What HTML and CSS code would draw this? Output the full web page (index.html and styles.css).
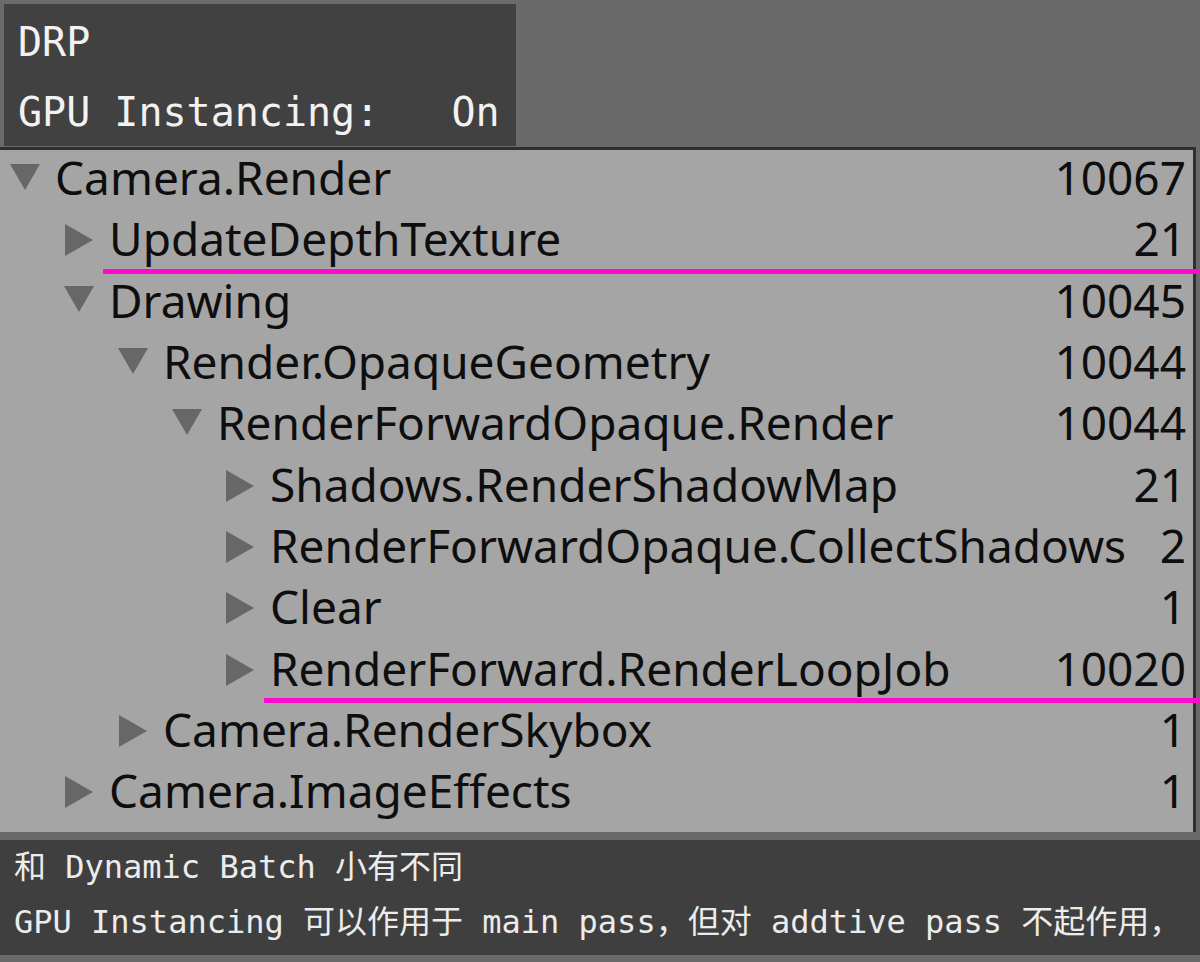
FILE: index.html
```html
<!DOCTYPE html>
<html lang="zh">
<head>
<meta charset="utf-8">
<title>Profiler</title>
<link rel="stylesheet" href="styles.css">
</head>
<body>
<div class="stats">
  <div class="line">DRP</div>
  <div class="line">GPU Instancing:   On</div>
</div>
<div class="panel">
  <div class="row l0"><span class="tw"><svg class="down" width="30" height="26" viewBox="0 0 30 26"><polygon points="0,0 30,0 15,26"/></svg></span><span class="name">Camera.Render</span><span class="num">10067</span></div>
  <div class="row l1 marked"><span class="tw"><svg class="right" width="28" height="32" viewBox="0 0 28 32"><polygon points="0,0 28,16 0,32"/></svg></span><span class="name">UpdateDepthTexture</span><span class="num">21</span></div>
  <div class="row l1"><span class="tw"><svg class="down" width="30" height="26" viewBox="0 0 30 26"><polygon points="0,0 30,0 15,26"/></svg></span><span class="name">Drawing</span><span class="num">10045</span></div>
  <div class="row l2"><span class="tw"><svg class="down" width="30" height="26" viewBox="0 0 30 26"><polygon points="0,0 30,0 15,26"/></svg></span><span class="name">Render.OpaqueGeometry</span><span class="num">10044</span></div>
  <div class="row l3"><span class="tw"><svg class="down" width="30" height="26" viewBox="0 0 30 26"><polygon points="0,0 30,0 15,26"/></svg></span><span class="name">RenderForwardOpaque.Render</span><span class="num">10044</span></div>
  <div class="row l4"><span class="tw"><svg class="right" width="28" height="32" viewBox="0 0 28 32"><polygon points="0,0 28,16 0,32"/></svg></span><span class="name">Shadows.RenderShadowMap</span><span class="num">21</span></div>
  <div class="row l4"><span class="tw"><svg class="right" width="28" height="32" viewBox="0 0 28 32"><polygon points="0,0 28,16 0,32"/></svg></span><span class="name">RenderForwardOpaque.CollectShadows</span><span class="num">2</span></div>
  <div class="row l4"><span class="tw"><svg class="right" width="28" height="32" viewBox="0 0 28 32"><polygon points="0,0 28,16 0,32"/></svg></span><span class="name">Clear</span><span class="num">1</span></div>
  <div class="row l4 marked"><span class="tw"><svg class="right" width="28" height="32" viewBox="0 0 28 32"><polygon points="0,0 28,16 0,32"/></svg></span><span class="name">RenderForward.RenderLoopJob</span><span class="num">10020</span></div>
  <div class="row l2"><span class="tw"><svg class="right" width="28" height="32" viewBox="0 0 28 32"><polygon points="0,0 28,16 0,32"/></svg></span><span class="name">Camera.RenderSkybox</span><span class="num">1</span></div>
  <div class="row l1"><span class="tw"><svg class="right" width="28" height="32" viewBox="0 0 28 32"><polygon points="0,0 28,16 0,32"/></svg></span><span class="name">Camera.ImageEffects</span><span class="num">1</span></div>
</div>
<div class="notes">
  <div class="nline">和 Dynamic Batch 小有不同</div>
  <div class="nline">GPU Instancing 可以作用于 main pass，但对 addtive pass 不起作用，</div>
</div>
</body>
</html>
```
FILE: styles.css
```css
html, body {
  margin: 0;
  padding: 0;
}
body {
  background: #6a6a6a;
  width: 1200px;
  height: 962px;
  overflow: hidden;
  padding-top: 4px;
  box-sizing: border-box;
}
.stats {
  margin-left: 4px;
  width: 512px;
  height: 142px;
  box-sizing: border-box;
  padding: 3px 0 0 14px;
  background: #414141;
  color: #f2f2f2;
  font-family: "DejaVu Sans Mono", monospace;
  font-size: 40px;
  margin-bottom: 1px;
}
.stats .line {
  height: 70px;
  line-height: 70px;
  white-space: pre;
}
.panel {
  width: 1196px;
  box-sizing: border-box;
  height: 685px;
  border-top: 3px solid #2f2f2f;
  border-right: 3px solid #2f2f2f;
  background: #a5a5a5;
  font-family: "Noto Sans", sans-serif;
  font-size: 46px;
  color: #0e0e0e;
}
.row {
  position: relative;
  display: flex;
  align-items: center;
  height: 61.3px;
  line-height: 61px;
  padding-right: 7px;
}
.row .name, .row .num {
  position: relative;
  top: -3px;
  white-space: nowrap;
}
.row .name {
  flex: 1;
}
.tw {
  width: 47px;
  flex: none;
  display: flex;
  align-items: center;
}
.tw svg {
  display: block;
  fill: #676767;
}
.tw svg.down {
  margin-left: 2px;
  margin-top: -8px;
}
.tw svg.right {
  margin-left: 3px;
  margin-top: -3px;
}
.l0 { padding-left: 8px; }
.l1 { padding-left: 62px; }
.l2 { padding-left: 116px; }
.l3 { padding-left: 170px; }
.l4 { padding-left: 223px; }
.marked::after {
  content: "";
  position: absolute;
  right: -7px;
  bottom: -1px;
  height: 5px;
  background: #ff0acb;
}
.l1.marked::after { left: 103px; }
.l4.marked::after { left: 264px; }
.notes {
  margin-top: 8px;
  height: 115px;
  background: #3f3f3f;
  color: #ececec;
  font-family: "DejaVu Sans Mono", "Noto Sans CJK SC", monospace;
  font-size: 32px;
  padding-left: 14px;
}
.nline {
  height: 55px;
  line-height: 55px;
  white-space: pre;
}
```
